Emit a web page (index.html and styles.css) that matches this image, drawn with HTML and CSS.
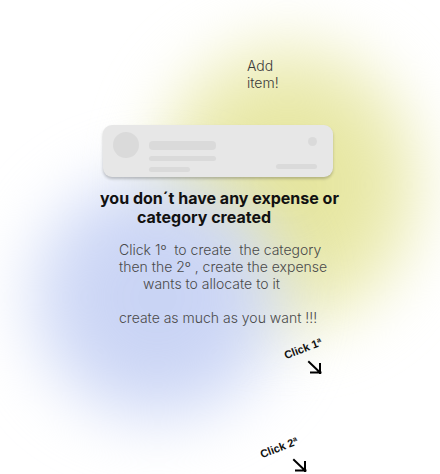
FILE: index.html
```html
<!DOCTYPE html>
<html>
<head>
<meta charset="utf-8">
<link rel="stylesheet" href="styles.css">
</head>
<body>
<div class="screen">
  <div class="blob blob-yellow"></div>
  <div class="blob blob-blue"></div>
  <main class="content">
    <p class="add-item">Add<br>item!</p>
    <div class="card">
      <div class="card-avatar"></div>
      <div class="card-lines">
        <span class="line line-title"></span>
        <span class="line line-sub"></span>
        <span class="line line-meta"></span>
      </div>
      <div class="card-side">
        <span class="side-dot"></span>
        <span class="side-bar"></span>
      </div>
    </div>
    <h1 class="headline">
      <span class="headline-l1">you don´t have any expense or</span>
      <span class="headline-l2">category created</span>
    </h1>
    <div class="hint">
      <span class="hint-line">Click 1º&nbsp; to create&nbsp; the category</span>
      <span class="hint-line">then the 2º , create the expense</span>
      <span class="hint-line indent">wants to allocate to it</span>
      <span class="hint-line blank">&nbsp;</span>
      <span class="hint-line">create as much as you want !!!</span>
    </div>
  </main>
  <span class="tip-label tip-label-1">Click 1ª</span>
  <svg class="tip-arrow tip-arrow-1" width="16" height="15" viewBox="0 0 16 15"><path d="M2 2 L13 12.5 M4 12.5 H13.5 M13 4 V13" fill="none" stroke="#000" stroke-width="2" stroke-linecap="square"/></svg>
  <span class="tip-label tip-label-2">Click 2ª</span>
  <svg class="tip-arrow tip-arrow-2" width="16" height="15" viewBox="0 0 16 15"><path d="M2 2 L13 12.5 M4 12.5 H13.5 M13 4 V13" fill="none" stroke="#000" stroke-width="2" stroke-linecap="square"/></svg>
</div>
</body>
</html>
```
FILE: styles.css
```css
* { box-sizing: border-box; }
html, body { margin: 0; padding: 0; background: #fff; }
body { font-family: Inter, "Noto Sans", sans-serif; }

.screen {
  position: relative;
  width: 440px;
  height: 474px;
  overflow: hidden;
  background: #fff;
}

.blob {
  position: absolute;
  border-radius: 50%;
  filter: blur(30px);
}
.blob-yellow {
  left: 150px;
  top: 35px;
  width: 275px;
  height: 300px;
  background: radial-gradient(circle, #e4e49a 0%, #e8e8a6 40%, rgba(238,238,190,0.7) 70%, rgba(255,255,255,0) 100%);
}
.blob-blue {
  left: 25px;
  top: 170px;
  width: 265px;
  height: 255px;
  background: radial-gradient(circle, #c8d3f4 0%, #cbd5f5 40%, rgba(212,222,248,0.7) 70%, rgba(255,255,255,0) 100%);
}

.content {
  position: relative;
  display: flex;
  flex-direction: column;
  padding-top: 57px;
}

.add-item {
  margin: 0 0 0 247px;
  font-size: 14px;
  line-height: 17px;
  font-weight: 300;
  color: #3a3a3a;
}

.card {
  margin: 34px 0 0 103px;
  width: 230px;
  height: 52px;
  background: #e7e7e7;
  border-radius: 9px;
  box-shadow: 0 2px 3px rgba(0,0,0,0.22);
  display: flex;
  padding: 7px 16px 0 10px;
}
.card-avatar {
  width: 26px;
  height: 26px;
  border-radius: 50%;
  background: #dadada;
  flex: none;
}
.card-lines {
  display: flex;
  flex-direction: column;
  margin-left: 10px;
  padding-top: 9px;
}
.line { display: block; background: #dadada; border-radius: 4px; }
.line-title { width: 67px; height: 9px; }
.line-sub { width: 67px; height: 5px; margin-top: 6px; border-radius: 3px; }
.line-meta { width: 41px; height: 5px; margin-top: 6px; border-radius: 3px; }
.card-side {
  margin-left: auto;
  display: flex;
  flex-direction: column;
  align-items: flex-end;
  padding-top: 5px;
}
.side-dot { display: block; width: 9px; height: 9px; border-radius: 50%; background: #dadada; }
.side-bar { display: block; width: 41px; height: 5px; border-radius: 3px; background: #dadada; margin-top: 18px; }

.headline {
  margin: 12px 0 0 100px;
  font-size: 16px;
  line-height: 19px;
  font-weight: 700;
  color: #111;
  display: flex;
  flex-direction: column;
}
.headline-l2 { margin-left: 37px; }

.hint {
  margin: 14px 0 0 119px;
  display: flex;
  flex-direction: column;
  font-size: 14px;
  line-height: 17px;
  font-weight: 300;
  color: #4a4a4a;
  white-space: pre;
}
.hint-line.indent { margin-left: 24px; }

.tip-label {
  position: absolute;
  display: block;
  font-family: "Liberation Sans", Arial, sans-serif;
  font-weight: 700;
  font-size: 11px;
  line-height: 13px;
  color: #111;
  white-space: nowrap;
  transform: rotate(-21deg);
  transform-origin: left bottom;
}
.tip-label-1 { left: 287px; top: 349px; }
.tip-label-2 { left: 263px; top: 448px; }

.tip-arrow { position: absolute; }
.tip-arrow-1 { left: 307px; top: 360px; }
.tip-arrow-2 { left: 292px; top: 458px; }
```
